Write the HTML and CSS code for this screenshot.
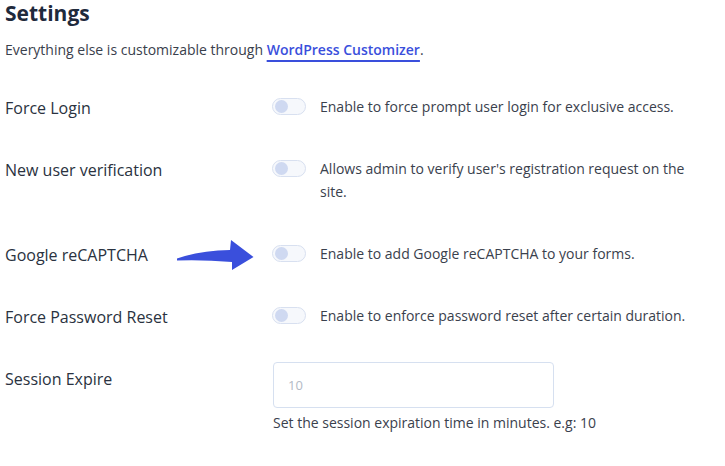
FILE: index.html
```html
<!DOCTYPE html>
<html lang="en">
<head>
<meta charset="utf-8">
<link rel="stylesheet" href="styles.css">
</head>
<body>
<div class="page">
  <h1 class="title">Settings</h1>
  <p class="intro">Everything else is customizable through <a class="link" href="#">WordPress Customizer</a>.</p>

  <div class="settings">
    <div class="row">
      <div class="label">Force Login</div>
      <span class="toggle"><span class="knob"></span></span>
      <div class="desc">Enable to force prompt user login for exclusive access.</div>
    </div>
    <div class="row">
      <div class="label">New user verification</div>
      <span class="toggle"><span class="knob"></span></span>
      <div class="desc">Allows admin to verify user's registration request on the site.</div>
    </div>
    <div class="row row-arrow">
      <div class="label">Google reCAPTCHA</div>
      <svg class="arrow" width="80" height="34" viewBox="0 0 80 34"><path d="M1 20.5 Q24 12.5 54 12 L55 2 L77.5 19 L56 32 L56 24 Q26 21.5 1 22.5 Z" fill="#3a4fdc"/></svg>
      <span class="toggle"><span class="knob"></span></span>
      <div class="desc">Enable to add Google reCAPTCHA to your forms.</div>
    </div>
    <div class="row">
      <div class="label">Force Password Reset</div>
      <span class="toggle"><span class="knob"></span></span>
      <div class="desc">Enable to enforce password reset after certain duration.</div>
    </div>
    <div class="row row-input">
      <div class="label label-input">Session Expire</div>
      <div class="field">
        <input class="input" type="text" placeholder="10">
        <div class="help">Set the session expiration time in minutes. e.g: 10</div>
      </div>
    </div>
  </div>
</div>
</body>
</html>
```
FILE: styles.css
```css
html, body {
  margin: 0;
  padding: 0;
  background: #ffffff;
}
.page {
  padding: 0 5px;
  font-family: "Open Sans", "DejaVu Sans", sans-serif;
  color: #2d3440;
}
.title {
  margin: 0;
  font-size: 21px;
  line-height: 26px;
  font-weight: 700;
  color: #1f2a3c;
}
.intro {
  margin: 12px 0 0;
  font-size: 14px;
  line-height: 23px;
  color: #39404c;
}
.link {
  color: #3a4fdc;
  font-weight: 600;
  text-decoration: underline;
  text-underline-offset: 5px;
  text-decoration-thickness: 1.5px;
}
.settings {
  margin-top: 34px;
}
.row {
  position: relative;
  display: grid;
  grid-template-columns: 267px 34px 1fr;
  column-gap: 0;
  align-items: start;
  padding-bottom: 39px;
}
.label {
  margin-top: 2px;
  margin-bottom: -2px;
  font-size: 16px;
  line-height: 23px;
  font-weight: 500;
  color: #2a3240;
}
.desc {
  margin-left: 14px;
  font-size: 14px;
  line-height: 23px;
  color: #3a414d;
  padding-right: 30px;
}
.toggle {
  display: block;
  box-sizing: border-box;
  width: 34px;
  height: 17px;
  margin-top: 3px;
  border: 1px solid #d8e0f0;
  border-radius: 9px;
  background: #f6f8fc;
  position: relative;
}
.knob {
  position: absolute;
  left: 2px;
  top: 1px;
  width: 13px;
  height: 13px;
  border-radius: 50%;
  background: #cfd9f1;
}
.arrow {
  position: absolute;
  left: 171px;
  top: -4px;
}
.row-input {
  grid-template-columns: 268px 1fr;
  margin-top: -4px;
}
.label-input {
  margin-top: 6px;
  margin-bottom: 0;
}
.field {
  display: flex;
  flex-direction: column;
}
.input {
  box-sizing: border-box;
  width: 281px;
  height: 46px;
  border: 1px solid #d6e0f0;
  border-radius: 4px;
  padding: 0 14px;
  font-family: inherit;
  font-size: 13px;
  color: #2d3440;
  outline: none;
}
.input::placeholder {
  color: #b3bac6;
}
.help {
  margin-top: 3px;
  font-size: 14px;
  line-height: 23px;
  color: #3a414d;
}
```
